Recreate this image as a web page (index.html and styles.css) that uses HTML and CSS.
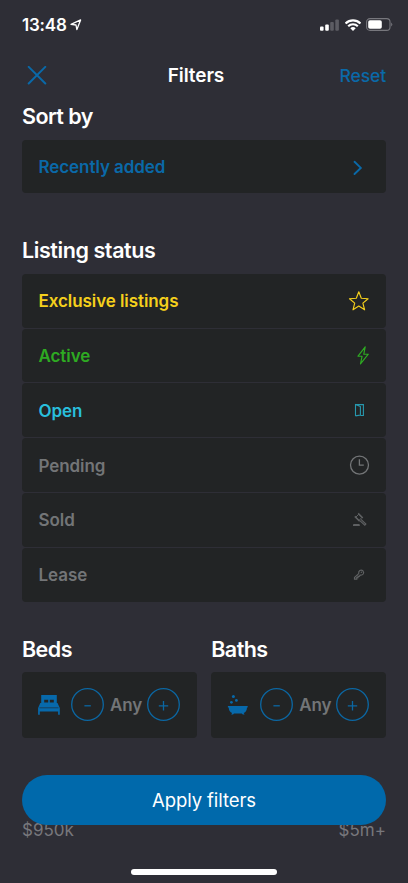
FILE: index.html
```html
<!DOCTYPE html>
<html lang="en">
<head>
<meta charset="utf-8">
<meta name="viewport" content="width=device-width, initial-scale=1">
<title>Filters</title>
<link rel="stylesheet" href="styles.css">
</head>
<body>
<div class="screen">
  <div class="status-bar">
    <div class="clock"><span class="time">13:48</span>
      <svg width="12" height="12" viewBox="0 0 12 12"><path d="M1 5.3 10.6.9 6.9 10.6 6 6Z" fill="none" stroke="#fff" stroke-width="1.3" stroke-linejoin="round"/></svg>
    </div>
    <div class="indicators">
      <svg width="19" height="12" viewBox="0 0 19 12"><rect y="7.6" width="3.6" height="4.2" rx="1" fill="#fff"/><rect x="5.2" y="5.6" width="3.6" height="6.2" rx="1" fill="#fff"/><rect x="10.2" y="3" width="3.6" height="8.8" rx="1" fill="#5c5c63"/><rect x="15.3" y=".5" width="3.6" height="11.3" rx="1" fill="#5c5c63"/></svg>
      <svg class="wifi" width="16" height="12" viewBox="0 0 16 12"><g fill="none" stroke="#fff" stroke-width="2.1"><path d="M.6 4.5a10.4 10.4 0 0 1 14.8 0"/><path d="M3.2 7.3a6.7 6.7 0 0 1 9.6 0"/></g><path d="M5.3 9.2a4 4 0 0 1 5.4 0L8 12Z" fill="#fff"/></svg>
      <svg class="battery" width="27" height="13" viewBox="0 0 27 13"><rect x=".6" y=".6" width="23.4" height="11.8" rx="3.4" fill="none" stroke="#77777d" stroke-width="1.1"/><rect x="2.2" y="2.3" width="13.6" height="8.4" rx="1.8" fill="#fff"/><path d="M25.2 4.5q2.2 2 0 4Z" fill="#77777d"/></svg>
    </div>
  </div>

  <header class="header">
    <button class="close" aria-label="Close"><svg width="20" height="20" viewBox="0 0 20 20"><path d="m1.7 .9 16.6 16.6M18.3 .9 1.7 17.5" fill="none" stroke="currentColor" stroke-width="2" stroke-linecap="round"/></svg></button>
    <h1>Filters</h1>
    <button class="reset">Reset</button>
  </header>

  <section class="sort">
    <h2>Sort by</h2>
    <div class="row blue"><span>Recently added</span>
      <svg class="icon" viewBox="0 0 24 24"><path d="m7.5 7.8 6.3 6.1-6.3 6.1" fill="none" stroke="currentColor" stroke-width="1.9" stroke-linecap="round"/></svg></div>
  </section>

  <section class="status">
    <h2 class="wide">Listing status</h2>
    <div class="rows">
      <div class="row yellow"><span>Exclusive listings</span>
        <svg class="icon" viewBox="0 0 24 24"><path d="m11.8 2.8 2.5 6.4 6.8.5-5.2 4.4 1.7 6.7-5.8-3.7L6 20.8l1.7-6.7-5.2-4.4 6.8-.5Z" fill="none" stroke="currentColor" stroke-width="1.15" stroke-linejoin="round"/></svg></div>
      <div class="row green"><span>Active</span>
        <svg class="icon" viewBox="0 0 24 24"><path d="M18.2 3.8 11 13.2h4.1l-1.6 7.7 7.8-9.7h-4.5Z" fill="none" stroke="currentColor" stroke-width="1.15" stroke-linejoin="round"/></svg></div>
      <div class="row cyan"><span>Open</span>
        <svg class="icon dim" viewBox="0 0 24 24"><path d="M8.5 6.6h7.9v10.9h-2.8M8.5 17.9V6.6l4.9 2v8.4l-4.9.9" fill="none" stroke="currentColor" stroke-width="1.1"/></svg></div>
      <div class="row gray"><span>Pending</span>
        <svg class="icon" viewBox="0 0 24 24"><circle cx="12.5" cy="12.1" r="9" fill="none" stroke="currentColor" stroke-width="1.3"/><path d="M12.4 6.2v6h4.4" fill="none" stroke="currentColor" stroke-width="1.3"/></svg></div>
      <div class="row gray"><span>Sold</span>
        <svg class="icon dim" viewBox="0 0 24 24"><g fill="none" stroke="currentColor"><path d="m8.8 9.2 3-3 3.2 3.2-3 3Z"/><path d="m11.2 5.4 4.6 4.6M7.8 8.4l4.8 4.8" stroke-width="1.5"/><path d="m14 11.3 4.9 4.7-1.1 1.2-5-4.6" stroke-width="1.1"/></g><path d="M6 18v-1q0-1 1-1h4.8q1 0 1 1v1Z" fill="currentColor"/></svg></div>
      <div class="row gray"><span>Lease</span>
        <svg class="icon dim" viewBox="0 0 24 24"><path d="M7.5 16.2v-1.7l4.2-3.9q-.3-2 1.1-3.1 1.6-1 3.1.3 1.4 1.5.3 3.2-1.1 1.4-3.1 1.1l-.8 1.2H11v1.3H9.8v1.6Z" fill="none" stroke="currentColor" stroke-width="1.2"/><circle cx="14.4" cy="9.2" r=".8" fill="currentColor"/></svg></div>
    </div>
  </section>

  <div class="rooms">
    <section>
      <h2>Beds</h2>
      <div class="counter">
        <svg class="room-icon" width="22" height="22" viewBox="0 0 22 22"><path fill="currentColor" fill-rule="evenodd" d="M3.2 1h15.6v8h.7l2.3 5v6.7h-1.7v-3.2H1.8v3.2H.1V14l2.2-5h.9ZM6.2 5.8v2.7h4V5.8Zm5.6 0v2.7h4V5.8Z"/><path d="M1.5 13.8h19" stroke="#222425" stroke-width=".6"/></svg>
        <button aria-label="Fewer beds"><svg viewBox="0 0 33 33"><circle cx="16.5" cy="16.5" r="15.8"/><path d="M13.4 17.8h6.4"/></svg></button>
        <span>Any</span>
        <button aria-label="More beds"><svg viewBox="0 0 33 33"><circle cx="16.5" cy="16.5" r="15.8"/><path d="M11.8 17.8h9.4M16.5 13.1v9.4"/></svg></button>
      </div>
    </section>
    <section>
      <h2>Baths</h2>
      <div class="counter">
        <svg class="room-icon" width="22" height="22" viewBox="0 0 22 22"><g fill="currentColor"><path d="M.9 11.9h19.8v1.6h-.7q-.2 4.1-3.3 5.6l.9 1.5h-1.8l-1-1.1H7l-1 1.1H4.2l.9-1.5Q1.9 17.6 1.7 13.5H.9Z"/><circle cx="6.4" cy="2.5" r="1.5"/><circle cx="9.4" cy="6.4" r="1.4"/><circle cx="4.4" cy="8.3" r="1.4"/></g></svg>
        <button aria-label="Fewer baths"><svg viewBox="0 0 33 33"><circle cx="16.5" cy="16.5" r="15.8"/><path d="M13.4 17.8h6.4"/></svg></button>
        <span>Any</span>
        <button aria-label="More baths"><svg viewBox="0 0 33 33"><circle cx="16.5" cy="16.5" r="15.8"/><path d="M11.8 17.8h9.4M16.5 13.1v9.4"/></svg></button>
      </div>
    </section>
  </div>

  <div class="prices"><span>$950k</span><span>$5m+</span></div>

  <footer class="footer">
    <button class="apply">Apply filters</button>
    <div class="home"></div>
  </footer>
</div>
</body>
</html>
```
FILE: styles.css
```css
* { box-sizing: border-box; }
body {
  margin: 0;
  background: #2e2e36;
  color: #fff;
  font: 500 17px/20px Inter, "Liberation Sans", sans-serif;
}
button { padding: 0; border: 0; background: none; color: #0a69a8; font: inherit; }
svg { display: block; flex: none; }
h1, h2 { margin: 0; }
.screen { position: relative; height: 883px; padding: 0 22px; overflow: hidden; }

.status-bar { display: flex; justify-content: space-between; height: 49px; padding-top: 14px; }
.clock { display: flex; gap: 3px; height: 21px; align-items: center; }
.time { font-size: 17px; font-weight: 600; letter-spacing: -0.2px; }
.indicators { display: flex; align-items: center; height: 21px; margin-right: -7px; }
.wifi { margin-left: 6px; }
.battery { margin-left: 5px; }

.header { display: grid; grid-template-columns: 97px 1fr 113px; align-items: center; height: 52px; padding-top: 1px; }
.close { justify-self: start; margin-left: 5px; }
.header h1 { text-align: center; font-size: 19px; font-weight: 600; letter-spacing: -0.1px; }
.reset { justify-self: end; font-size: 17.5px; font-weight: 500; letter-spacing: -0.1px; }

h2 { height: 30px; font-size: 21.5px; font-weight: 600; line-height: 30px; letter-spacing: -0.55px; }
h2.wide { letter-spacing: -0.42px; }
.sort h2 { margin-bottom: 8.5px; }
.status { margin-top: 42px; }
.status h2 { margin-bottom: 8.5px; }
.rows { display: grid; gap: 1px; }
.row {
  display: flex; align-items: center; justify-content: space-between;
  height: 53.8px; padding: 0 15px 0 16.5px;
  border-radius: 4px; background: #222425;
  font-size: 17px; font-weight: 600; letter-spacing: -0.07px;
}
.row span { padding-top: 1px; }
.icon { width: 24px; height: 24px; }
.dim { opacity: .75; }
.blue { color: #0a69a8; }
.yellow { color: #f5d01c; }
.green { color: #2eaa22; }
.cyan { color: #29bfdc; }
.gray { color: #737577; }

.rooms { display: grid; grid-template-columns: 1fr 1fr; gap: 14.5px; margin-top: 32px; }
.rooms h2 { margin-bottom: 8px; }
.counter {
  display: flex; align-items: center; height: 66px; padding-left: 16px;
  border-radius: 4px; background: #222425; color: #737577;
}
.room-icon { margin-right: 11px; color: #0769ab; }
.counter button svg { width: 33px; height: 33px; fill: none; stroke: #0b67a3; stroke-width: 1.3; }
.counter span { width: 43px; padding-left: 1px; text-align: center; font-size: 17px; font-weight: 600; letter-spacing: -0.15px; }
.prices { display: flex; justify-content: space-between; margin-top: 82px; color: #77777c; font-size: 17px; font-weight: 400; }

.footer { position: absolute; left: 22px; right: 22px; bottom: 8px; display: flex; flex-direction: column; gap: 44px; align-items: center; }
.apply { width: 100%; height: 50px; border-radius: 25px; background: #0069ab; color: #fff; font-size: 18.5px; font-weight: 400; letter-spacing: -0.08px; }
.home { width: 146px; height: 6px; border-radius: 3px; background: #fff; }
```
